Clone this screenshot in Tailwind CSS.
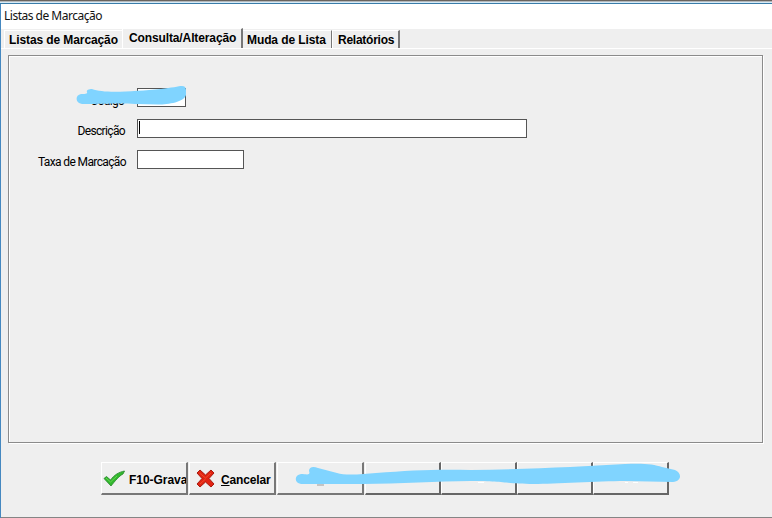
<!DOCTYPE html>
<html lang="pt-BR">
<head>
<meta charset="utf-8">
<title>Listas de Marcação</title>
<script src="https://cdn.jsdelivr.net/npm/@tailwindcss/browser@4"></script>
</head>
<body class="w-[772px] h-[518px] overflow-hidden bg-[#efefef] text-black font-['Liberation_Sans',sans-serif]">
<div class="flex flex-col h-[518px] w-[772px]">
  <div class="h-px bg-[#69645f]"></div>
  <div class="h-px bg-[#b5b8ba]"></div>
  <div class="h-px bg-[#d5eaf7]"></div>
  <div class="h-px bg-[#397ca8]"></div>
  <div class="flex flex-col flex-1 border-l border-[#4588c0]">
    <header class="h-[25px] bg-white pl-[3px]"><h1 class="font-['Noto_Sans',sans-serif] text-[12px] leading-[23px] tracking-[-0.5px] whitespace-nowrap text-[#111]">Listas de Marcação</h1></header>
    <nav class="h-[20px] flex items-end pl-[3px] text-[12px] font-bold whitespace-nowrap border-b border-white">
      <div class="w-[118px] h-[18px] border-t border-l border-white pl-[4px] pt-px leading-[16px] tracking-[-0.1px]">Listas de Marcação</div>
      <div class="w-[121px] h-[20px] border-t border-l border-white border-r-2 border-r-[#777] pl-[6px] leading-[18px] tracking-[-0.12px]">Consulta/Alteração</div>
      <div class="w-[89px] h-[18px] border-t border-t-white border-r border-r-[#777] pl-[4px] pt-px leading-[16px] tracking-[-0.1px]">Muda de Lista</div>
      <div class="w-[68px] h-[18px] border-t border-l border-white border-r-2 border-r-[#777] pl-[5px] pt-px leading-[16px] tracking-[-0.25px]">Relatórios</div>
    </nav>
    <main class="mt-[6px] ml-[7px] w-[755px] h-[388px] border border-[#8b8b8b] shadow-[1px_1px_0_#fff,inset_1px_1px_0_#fff] pt-[32px] flex flex-col gap-[12px] font-[Roboto,sans-serif] text-[12px]">
      <div class="relative flex h-[19px]">
        <label class="w-[115px] text-right leading-[12px] pt-[7px] tracking-[-0.75px]">Código</label>
        <div class="ml-[13px] w-[49px] h-[19px] bg-white border border-[#555]"></div>
        <svg class="absolute left-[66px] top-[-4px]" width="114" height="22" viewBox="75 84 114 22" fill="#80d4ff"><path d="M81 94C84 94 88 94 87 92C86 90 89 89 92 89C105 94 135 91 161 89C171 88 179 86 182 86C187 86 186 91 186 95C184 102 169 104.500 158 104.500L135 104C121 103 106 104 82 104C75 103 75 95 81 94Z"/></svg>
      </div>
      <div class="flex h-[19px]">
        <label class="w-[116px] text-right leading-[12px] pt-[6px] tracking-[-0.65px]">Descrição</label>
        <div class="ml-[12px] w-[390px] h-[19px] bg-white border border-[#555] pl-px pt-px"><div class="w-px h-[13px] bg-black"></div></div>
      </div>
      <div class="flex h-[19px]">
        <label class="w-[117px] text-right leading-[12px] pt-[6px] whitespace-nowrap tracking-[-0.62px]">Taxa de Marcação</label>
        <div class="ml-[11px] w-[107px] h-[19px] bg-white border border-[#555]"></div>
      </div>
    </main>
    <footer class="relative mt-[19px] ml-[100px] flex h-[33px] text-[12px] font-bold whitespace-nowrap">
      <div class="w-[87px] mr-px border-t border-l border-white border-r-2 border-b-2 border-r-[#777] border-b-[#777] flex items-center pl-px overflow-hidden">
        <svg class="shrink-0" width="22" height="18" viewBox="0 0 22 18"><path d="M1 9.500L3.500 7.500L7.500 11C11 6 16 3 21.500 2L20 5C16 7 12 12 8 17Z" fill="#32b82d" stroke="#25852a" stroke-width=".8" stroke-linejoin="round"/><path d="M3 9L7.500 13L14 7" fill="none" stroke="#65d253"/></svg>
        <span class="ml-[4px] pt-[3px] tracking-[-0.05px]">F10-Grava</span>
      </div>
      <div class="w-[87px] mr-px border-t border-l border-white border-r-2 border-b-2 border-r-[#777] border-b-[#777] flex items-center pl-[6px]">
        <svg class="shrink-0" width="19" height="19" viewBox="0 0 19 19"><path d="M1 4L4 1L9.500 6L15 1L18 4L13 9.500L18 15L15 18L9.500 13L4 18L1 15L6 9.500Z" fill="#e12312" stroke="#a61b10" stroke-linejoin="round"/><path d="M3.500 4L9.500 9L15 4M9.500 10L4 15" fill="none" stroke="#f04b2b"/></svg>
        <span class="ml-[6px] pt-[3px] tracking-[-0.15px]"><span class="underline">C</span>ancelar</span>
      </div>
      <div class="w-[87px] mr-px border-t border-l border-white border-r-2 border-b-2 border-r-[#777] border-b-[#777]"></div>
      <div class="w-[76px] border-t border-l border-white border-r-2 border-b-2 border-r-[#666] border-b-[#666]"></div>
      <div class="w-[76px] border-t border-l border-white border-r-2 border-b-2 border-r-[#666] border-b-[#666]"></div>
      <div class="w-[76px] border-t border-l border-white border-r-2 border-b-2 border-r-[#666] border-b-[#666]"></div>
      <div class="w-[76px] border-t border-l border-white border-r-2 border-b-2 border-r-[#666] border-b-[#666]"></div>
      <svg class="absolute left-[194px] top-[-2px]" width="390" height="30" viewBox="295 460 390 30"><path d="M317 485H324" stroke="#999"/><path d="M478 482.500H484M625 482.500H628M633 482.500H638" stroke="#fff"/><path d="M301 474C306 474 311 476 309 471C309 467 313 466 318 468L337 473C346 476 363 474 376 473C411 470 441 469 471 470C506 470 540 468 570 467L625 464C642 463 654 464 662 467L675 470C682 473 682 481 673 482L625 481C598 481 555 484 534 484C506 484 506 481 470 481C439 481 399 484 363 484L301 484C294 483 294 475 301 474Z" fill="#80d4ff"/></svg>
    </footer>
    <div class="mt-auto h-px bg-[#858585]"></div>
  </div>
</div>
</body>
</html>
